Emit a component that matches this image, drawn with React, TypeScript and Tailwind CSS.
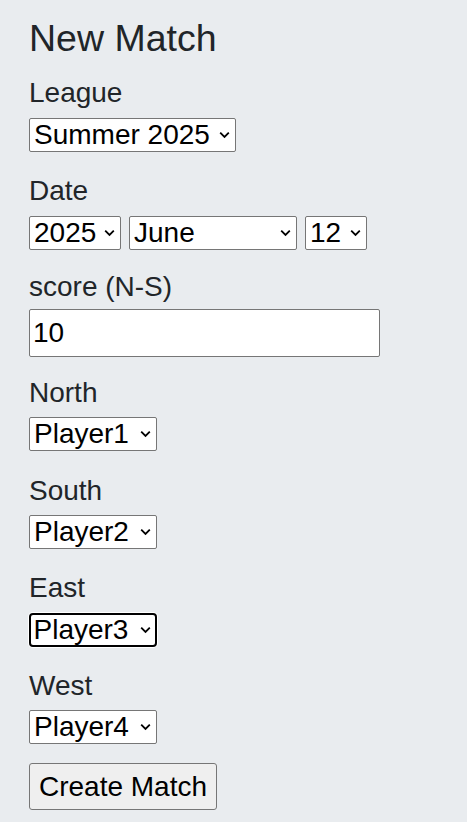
import clsx from "clsx";

const years = ["2024", "2025", "2026"];
const months = [
  "January",
  "February",
  "March",
  "April",
  "May",
  "June",
  "July",
  "August",
  "September",
  "October",
  "November",
  "December",
];
const days = Array.from({ length: 31 }, (_, i) => String(i + 1));
const players = ["Player1", "Player2", "Player3", "Player4"];

type SelectProps = {
  value: string;
  options: string[];
  width: string;
  focused?: boolean;
};

function Chevron() {
  return (
    <svg
      className="pointer-events-none absolute right-[6px] top-1/2 -translate-y-1/2"
      fill="none"
      height="7"
      viewBox="0 0 11 7"
      width="11"
    >
      <path d="M1.2 1.2l4.3 4.3 4.3-4.3" stroke="#000" strokeWidth="1.8" />
    </svg>
  );
}

function Select({ value, options, width, focused }: SelectProps) {
  return (
    <div className={clsx("relative block", width)}>
      <select
        className={clsx(
          "block h-[34px] w-full appearance-none bg-white text-[28px] leading-[30px] text-black outline-none",
          focused
            ? "rounded-[4px] border-[2.5px] border-black pl-[2.5px] shadow-[0_0_0_1px_#fff]"
            : "rounded-[2px] border border-[#767676] pl-[4px]",
        )}
        defaultValue={value}
      >
        {options.map((o) => (
          <option key={o}>{o}</option>
        ))}
      </select>
      <Chevron />
    </div>
  );
}

function Label({ text, className }: { text: string; className: string }) {
  return (
    <label className={clsx("block h-[30px] text-[28px] leading-[30px]", className)}>
      {text}
    </label>
  );
}

export default function App() {
  return (
    <div className="min-h-[822px] bg-[#e9ecef] pl-[29px] pt-[16px] font-['Liberation_Sans',Arial,sans-serif] text-[#212529]">
      <h2 className="h-[44px] text-[37.5px] leading-[44px]">New Match</h2>

      <Label className="mt-[18px] mb-[9.5px]" text="League" />
      <Select options={["Spring 2025", "Summer 2025"]} value="Summer 2025" width="w-[207px]" />

      <Label className="mt-[24.5px] mb-[9.5px]" text="Date" />
      <div className="flex gap-[8px]">
        <Select options={years} value="2025" width="w-[92px]" />
        <Select options={months} value="June" width="w-[168px]" />
        <Select options={days} value="12" width="w-[62px]" />
      </div>

      <Label className="mt-[22.5px] mb-[7px]" text="score (N-S)" />
      <input
        className="block h-[48px] w-[351px] rounded-[2px] border border-[#767676] bg-white pl-[3px] text-[28px] text-black outline-none"
        defaultValue="10"
        type="text"
      />

      <Label className="mt-[20.5px] mb-[9.5px]" text="North" />
      <Select options={players} value="Player1" width="w-[128px]" />

      <Label className="mt-[24.5px] mb-[9.5px]" text="South" />
      <Select options={players} value="Player2" width="w-[128px]" />

      <Label className="mt-[24px] mb-[9.5px]" text="East" />
      <Select focused options={players} value="Player3" width="w-[128px]" />

      <Label className="mt-[24px] mb-[9.5px]" text="West" />
      <Select options={players} value="Player4" width="w-[128px]" />

      <button
        className="mt-[19px] block h-[47px] w-[188px] rounded-[3px] border border-[#767676] bg-[#efefef] text-center text-[28px] text-black"
        type="button"
      >
        Create Match
      </button>
    </div>
  );
}
